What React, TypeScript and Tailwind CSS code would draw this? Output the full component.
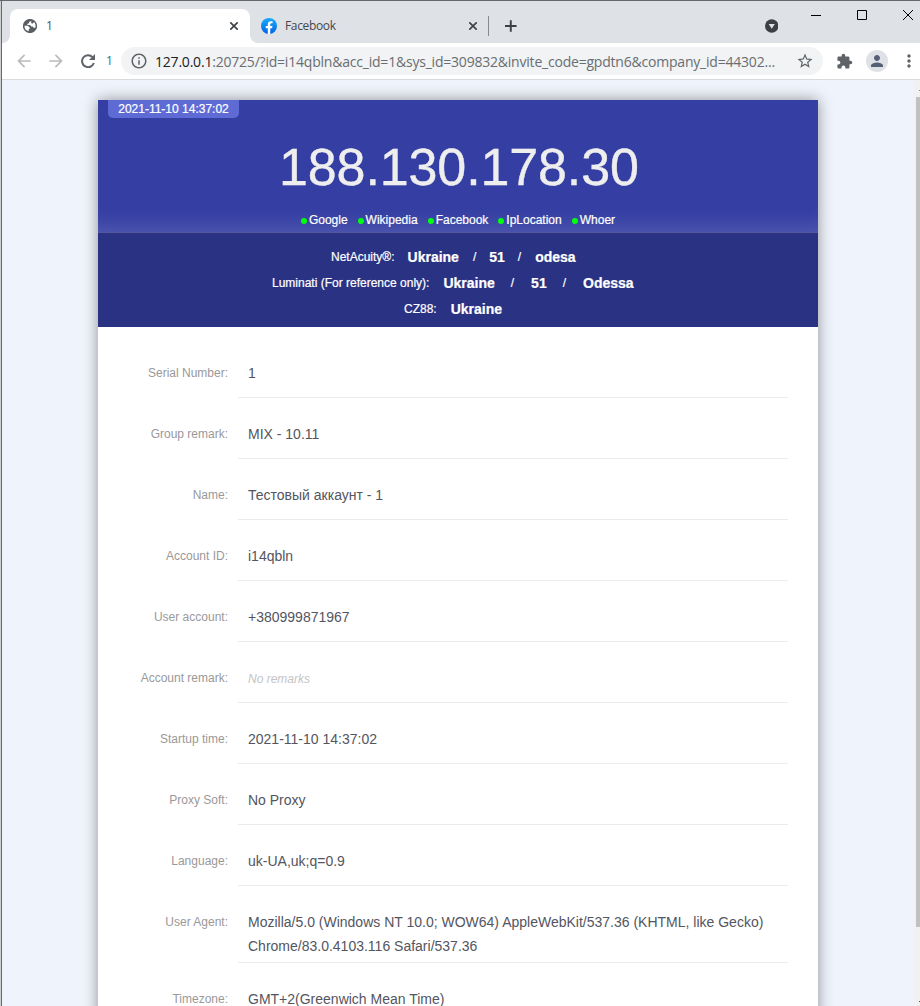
import {
  MdArrowBack,
  MdArrowForward,
  MdExtension,
  MdInfoOutline,
  MdMoreVert,
  MdPerson,
  MdStarBorder,
} from "react-icons/md";

interface Field {
  label: string;
  value: string;
  empty?: boolean;
}

const checks = ["Google", "Wikipedia", "Facebook", "IpLocation", "Whoer"];

const fields: Field[] = [
  { label: "Serial Number:", value: "1" },
  { label: "Group remark:", value: "MIX - 10.11" },
  { label: "Name:", value: "Тестовый аккаунт - 1" },
  { label: "Account ID:", value: "i14qbln" },
  { label: "User account:", value: "+380999871967" },
  { label: "Account remark:", value: "No remarks", empty: true },
  { label: "Startup time:", value: "2021-11-10 14:37:02" },
  { label: "Proxy Soft:", value: "No Proxy" },
  { label: "Language:", value: "uk-UA,uk;q=0.9" },
  {
    label: "User Agent:",
    value:
      "Mozilla/5.0 (Windows NT 10.0; WOW64) AppleWebKit/537.36 (KHTML, like Gecko) Chrome/83.0.4103.116 Safari/537.36",
  },
  { label: "Timezone:", value: "GMT+2(Greenwich Mean Time)" },
];

function FacebookLogo() {
  return (
    <svg width="16" height="16" viewBox="0 0 16 16" className="shrink-0">
      <defs>
        <linearGradient id="fb" x1="0" y1="0" x2="0" y2="1">
          <stop offset="0" stopColor="#18acfe" />
          <stop offset="1" stopColor="#0163e0" />
        </linearGradient>
      </defs>
      <circle cx="8" cy="8" r="8" fill="url(#fb)" />
      <path
        d="M11.1 10.3l.36-2.3H9.25V6.5c0-.63.3-1.25 1.3-1.25h1V3.3s-.9-.15-1.78-.15C7.97 3.15 6.8 4.25 6.8 6.23V8H4.75v2.3H6.8v5.6a8 8 0 0 0 2.45 0v-5.6z"
        fill="#fff"
      />
    </svg>
  );
}

function Globe() {
  return (
    <svg width="14" height="14" viewBox="0 0 14 14" className="shrink-0">
      <circle cx="7" cy="7" r="7.1" fill="#5a5e63" />
      <path
        d="M8.3 1.7L6.2 2.9 6 4.3l-1.5.4-.2 1.4H7l1.3 1.3 1.5.1.8 1.3h1.7A5.6 5.6 0 0 0 11 3.1L9.9 4.4H8.6L8.1 3.2z"
        fill="#fff"
      />
      <path d="M1.5 6.7l3.3.1 1.9 1.6v1.4l-1.1.6.2 1.9A5.6 5.6 0 0 1 1.5 6.7z" fill="#fff" />
    </svg>
  );
}

function ReloadIcon() {
  return (
    <svg width="14" height="14" viewBox="0 0 14 14" className="ml-[15px] shrink-0">
      <path d="M11.5 3.1A6 6 0 1 0 12.8 9" fill="none" stroke="#5f6368" strokeWidth="2" />
      <path d="M14 0v6H8z" fill="#5f6368" />
    </svg>
  );
}

function CloseIcon() {
  return (
    <svg width="8" height="8" viewBox="0 0 8 8" className="ml-auto">
      <path d="M.3.3l7.4 7.4M7.7.3L.3 7.7" stroke="#3c4043" strokeWidth="1.6" />
    </svg>
  );
}

function TabStrip() {
  return (
    <div className="flex h-[42px] bg-[#dee1e6] pt-2">
      <div className="flex w-2 items-end bg-white">
        <div className="h-full w-2 rounded-br-lg bg-[#dee1e6]" />
      </div>
      <div className="bg-white">
        <div className="h-full bg-[#dee1e6]">
          <div className="flex h-full w-60 items-center rounded-t-lg bg-white pl-[13px] pr-3">
            <Globe />
            <span className="ml-[9px] text-[12px] text-[#45525f]">1</span>
            <CloseIcon />
          </div>
        </div>
      </div>
      <div className="bg-white">
        <div className="flex h-full w-[238px] items-center rounded-bl-lg bg-[#dee1e6] pl-[11px] pr-[11px]">
          <FacebookLogo />
          <span className="ml-2 text-[12px] tracking-[-0.35px] text-[#45494d]">Facebook</span>
          <CloseIcon />
        </div>
      </div>
      <div className="mt-[7px] h-5 w-px bg-[#85888d]" />
      <svg width="12" height="12" viewBox="0 0 12 12" className="ml-4 mt-[11px]">
        <path d="M6 0v12M0 6h12" stroke="#3c4043" strokeWidth="2" />
      </svg>
      <svg width="14" height="14" viewBox="0 0 14 14" className="ml-[248px] mt-[10px]">
        <circle cx="7" cy="7" r="7" fill="#3c4043" />
        <path d="M3.8 5h6.4L7 9.8z" fill="#dee1e6" />
      </svg>
      <svg width="110" height="12" viewBox="0 0 110 12" className="ml-[32px] shrink-0" fill="none" stroke="#000">
        <path d="M1 6.5h10" />
        <path d="M47.5 1.5h9v9h-9z" />
        <path d="M93 1l10 10M103 1l-10 10" />
      </svg>
    </div>
  );
}

function Toolbar() {
  return (
    <div className="flex h-[37px] shrink-0 items-center border-b border-[#d9dadc] bg-white">
      <MdArrowBack size={20} color="#babcbe" className="ml-3 shrink-0" />
      <MdArrowForward size={20} color="#babcbe" className="ml-3 shrink-0" />
      <ReloadIcon />
      <span className="ml-[11px] w-2 text-[12px] text-[#2b7186]">1</span>
      <div className="ml-[7px] flex h-7 w-[702px] shrink-0 items-center rounded-full bg-[#f1f3f4] pl-[9px] pr-[9px]">
        <MdInfoOutline size={18} color="#5f6368" className="shrink-0" />
        <div className="ml-[7px] flex-1 whitespace-nowrap text-[14px] tracking-[-0.21px] text-[#6a6d71]">
          <span className="text-[#202124]">127.0.0.1</span>
          :20725/?id=i14qbln&amp;acc_id=1&amp;sys_id=309832&amp;invite_code=gpdtn6&amp;company_id=44302...
        </div>
        <MdStarBorder size={18} color="#5f6368" className="shrink-0" />
      </div>
      <MdExtension size={17} color="#5f6368" className="ml-[13px] shrink-0" />
      <div className="ml-[13px] flex size-[22px] shrink-0 items-center justify-center rounded-full bg-[#dee1e6]">
        <MdPerson size={18} color="#566075" />
      </div>
      <MdMoreVert size={20} color="#5f6368" className="ml-[11px] shrink-0" />
    </div>
  );
}

function Slash({ className }: { className: string }) {
  return <span className={className}>/</span>;
}

function IpHeader() {
  return (
    <div className="h-[133px] border-b border-[#54599e] bg-[#353fa3] shadow-[inset_0_-20px_20px_-14px_rgba(255,255,255,0.14)]">
      <div className="ml-[10px] flex h-[18px] w-[131px] items-center justify-center rounded-b-[5px] bg-[#5f6bd5] text-[12px] text-white [-webkit-text-stroke:0.2px_white]">
        2021-11-10 14:37:02
      </div>
      <div className="mt-[18px] h-[62px] pl-[181px] text-[52px] leading-[62px] tracking-[-0.12px] text-[#eeeeee] [-webkit-text-stroke:0.4px_#eeeeee]">
        188.130.178.30
      </div>
      <div className="mt-[14px] flex justify-center gap-[10px] text-[12px] leading-4 text-white [-webkit-text-stroke:0.2px_white]">
        {checks.map((name) => (
          <div key={name} className="flex items-center">
            <i className="mr-[2px] mt-[2px] size-[6px] rounded-full bg-[#00ff0c]" />
            {name}
          </div>
        ))}
      </div>
    </div>
  );
}

function GeoInfo() {
  return (
    <div className="h-[94px] bg-[#2a3284] pt-[11px] text-[12px] leading-[26px] text-white [-webkit-text-stroke:0.2px_white]">
      <div className="flex h-[26px] pl-[233px]">
        <span>NetAcuity®:</span>
        <b className="ml-[13px] text-[14px]">Ukraine</b>
        <Slash className="ml-[14px]" />
        <b className="ml-[13px] text-[14px]">51</b>
        <Slash className="ml-[13px]" />
        <b className="ml-[14px] text-[14px]">odesa</b>
      </div>
      <div className="flex h-[26px] pl-[174px]">
        <span>Luminati (For reference only):</span>
        <b className="ml-[14px] text-[14px]">Ukraine</b>
        <Slash className="ml-4" />
        <b className="ml-[17px] text-[14px]">51</b>
        <Slash className="ml-4" />
        <b className="ml-[17px] text-[14px]">Odessa</b>
      </div>
      <div className="flex h-[26px] pl-[306px]">
        <span>CZ88:</span>
        <b className="ml-[14px] text-[14px]">Ukraine</b>
      </div>
    </div>
  );
}

function FieldRow({ label, value, empty }: Field) {
  return (
    <div className="flex pt-6">
      <div className="w-[130px] text-right text-[12px] leading-6 text-[#999999]">{label}</div>
      <div className="ml-[10px] min-h-[37px] w-[550px] border-b border-[#ebebeb] px-[10px] pb-1 text-[14px] leading-6 text-[#545560]">
        {empty ? <span className="text-[12px] italic text-[#c4c4c4]">{value}</span> : value}
      </div>
    </div>
  );
}

export default function App() {
  return (
    <div className="flex h-[1006px] w-[920px] overflow-hidden border-t border-[#66686b] bg-[#eff3fb] font-['Open_Sans',sans-serif]">
      <div className="w-px shrink-0 bg-[#cfd0d2]" />
      <div className="w-px shrink-0 bg-[#66686b]" />
      <div className="flex w-[918px] shrink-0 flex-col">
        <TabStrip />
        <Toolbar />
        <div className="flex min-h-0 flex-1 font-['Liberation_Sans',Arial,sans-serif]">
          <div className="w-[912px] overflow-hidden pl-24 pt-5">
            <div className="h-[960px] w-[720px] bg-white shadow-[0_0_14px_rgba(0,0,0,0.4)]">
              <IpHeader />
              <GeoInfo />
              <div className="pt-[10px]">
                {fields.map((field) => (
                  <FieldRow key={field.label} {...field} />
                ))}
              </div>
            </div>
          </div>
          {/* scrollbar, cut off by the window edge */}
          <div className="flex flex-1 flex-col bg-[#f1f1f1] pl-[2px]">
            <div className="mb-[6px] ml-auto mt-[10px] size-px bg-[#8a8a8a]" />
            <div className="h-[830px] bg-[#c1c1c1]" />
            <div className="mb-1 ml-auto mt-auto size-px bg-[#505050]" />
          </div>
        </div>
      </div>
    </div>
  );
}
